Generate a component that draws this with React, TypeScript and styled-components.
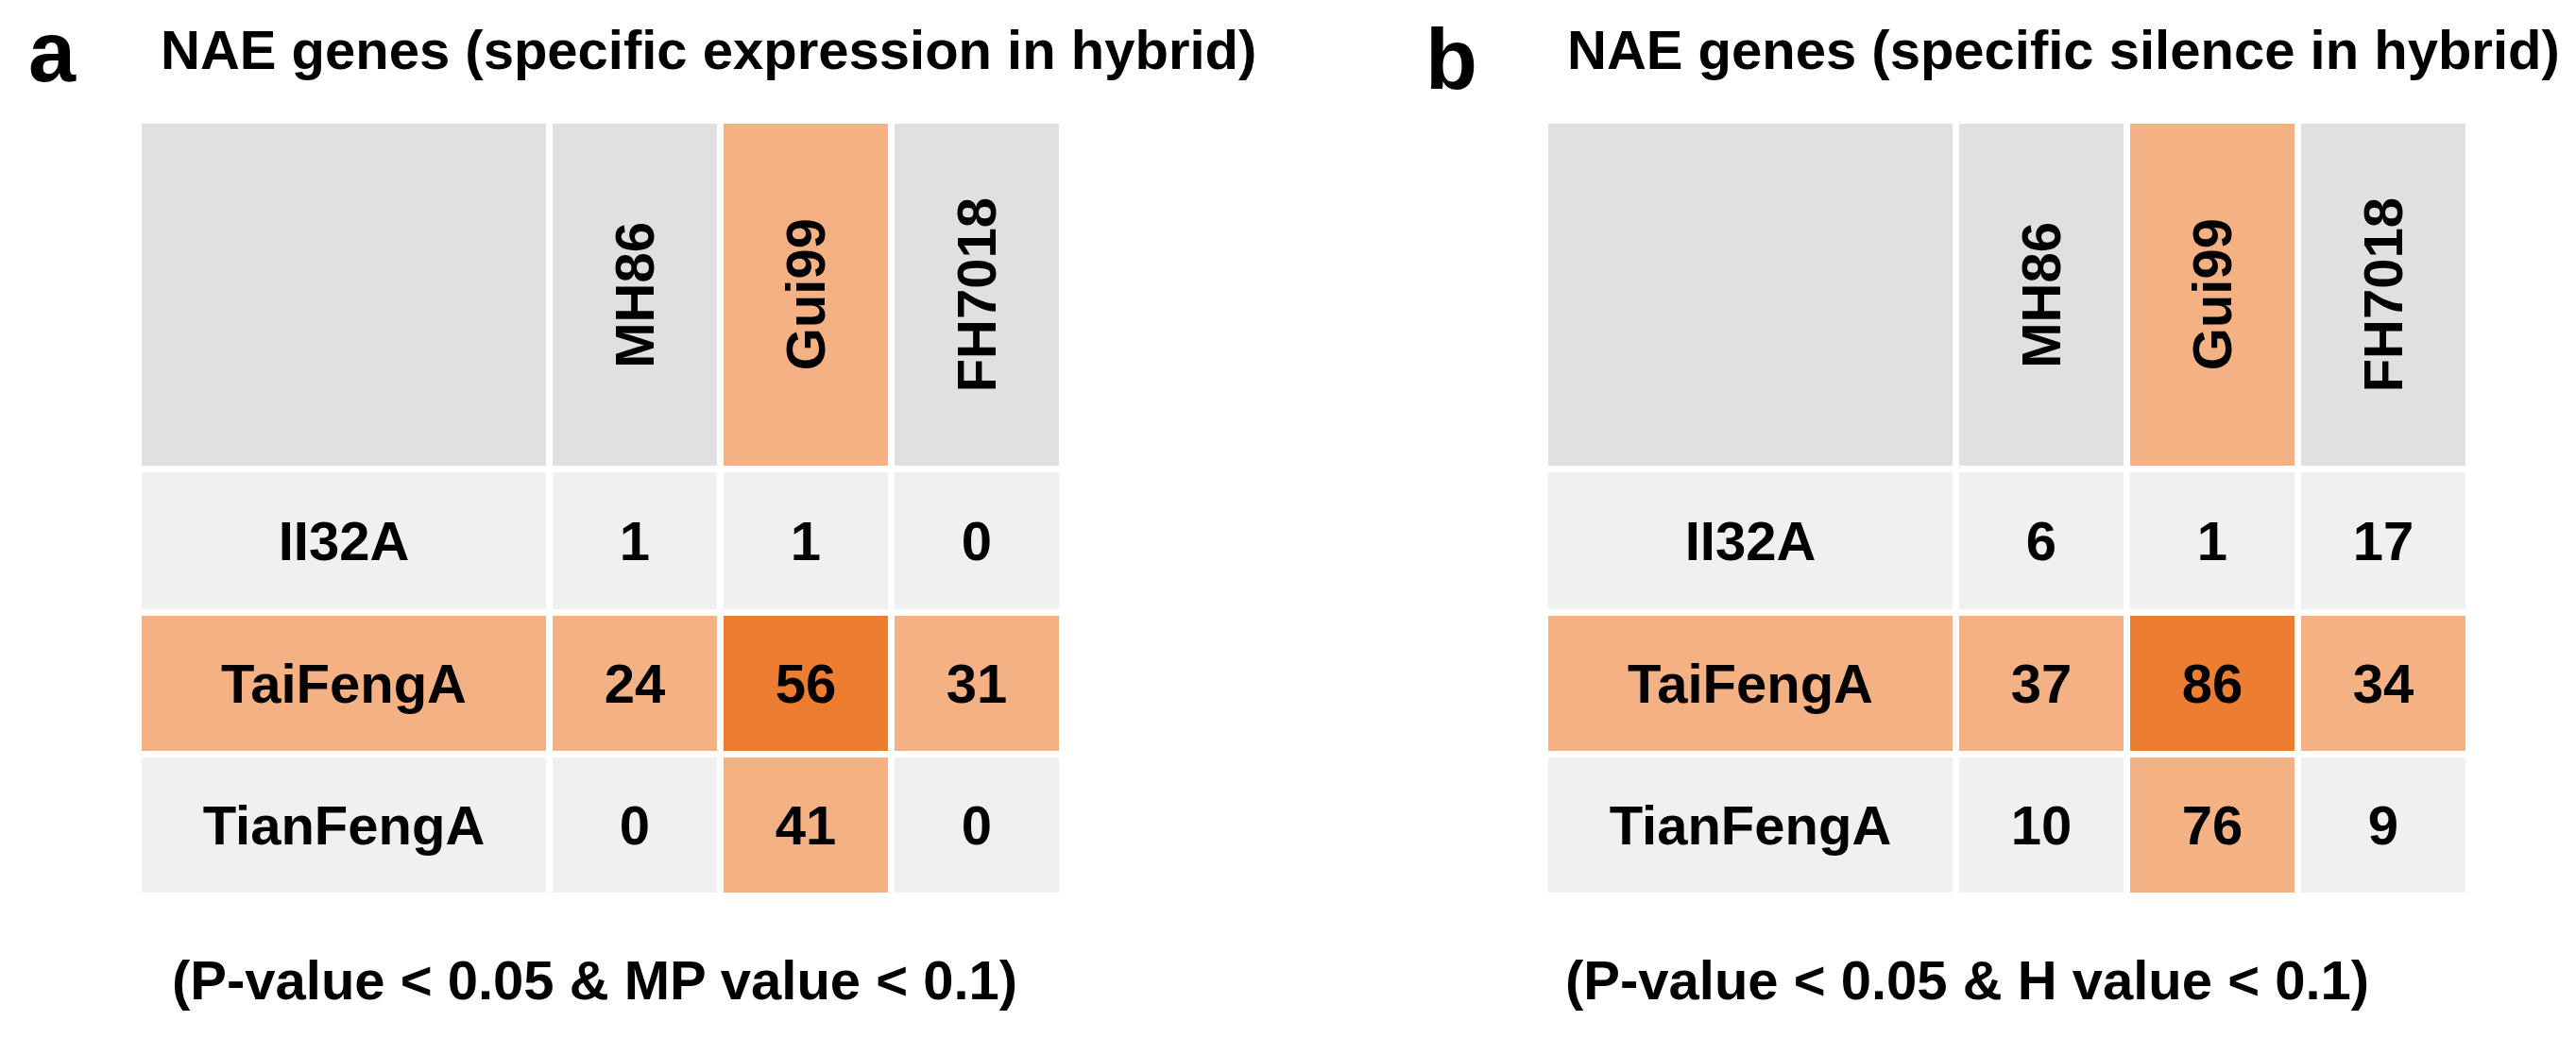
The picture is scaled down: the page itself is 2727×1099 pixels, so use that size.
import styled, { createGlobalStyle } from 'styled-components';

const GlobalStyle = createGlobalStyle`
	html,
	body {
		margin: 0;
		padding: 0;
		background: #ffffff;
	}

	body {
		color: #000000;
		font-family: 'Liberation Sans', Arial, sans-serif;
	}
`;

const palette = {
	head: '#e0e0e0',
	plain: '#f0f0f0',
	warm: '#f4b183',
	hot: '#ed7d31',
};

type Tone = keyof typeof palette;

const Figure = styled.main`
	display: grid;
	grid-template-columns: 1489px 1238px;
	height: 1099px;
	overflow: hidden;
	width: 2727px;
`;

const Panel = styled.section`
	display: flex;
	flex-direction: column;
`;

const Heading = styled.header`
	align-items: flex-start;
	display: flex;
	height: 131px;
`;

const Letter = styled.span<{ $left: number; $top: number }>`
	box-sizing: border-box;
	flex: 0 0 170px;
	font-size: 90px;
	font-weight: 700;
	line-height: 90px;
	margin-top: ${(p) => p.$top}px;
	padding-left: ${(p) => p.$left}px;
`;

const Title = styled.h2`
	font-size: 58px;
	font-weight: 700;
	line-height: 58px;
	margin: 24px 0 0;
	white-space: nowrap;
`;

const Grid = styled.div`
	display: grid;
	gap: 7px;
	grid-template-columns: 428px 174px 174px 174px;
	grid-template-rows: 362px 145px 143px 143px;
	margin-left: 150px;
	width: 971px;
`;

const Cell = styled.div<{ $tone: Tone }>`
	align-items: center;
	background: ${(p) => palette[p.$tone]};
	display: flex;
	font-size: 58px;
	font-weight: 700;
	justify-content: center;
	line-height: 58px;
	white-space: nowrap;
`;

const Sideways = styled.span`
	transform: rotate(180deg);
	writing-mode: vertical-rl;
`;

const Footnote = styled.p<{ $left: number }>`
	font-size: 58px;
	font-weight: 700;
	line-height: 58px;
	margin: 64px 0 0 ${(p) => 150 + p.$left}px;
	white-space: nowrap;
`;

type PanelData = {
	letter: string;
	letterLeft: number;
	letterTop: number;
	title: string;
	rows: { name: string; values: number[] }[];
	note: string;
	noteLeft: number;
};

const lines = ['MH86', 'Gui99', 'FH7018'];

const panels: PanelData[] = [
	{
		letter: 'a',
		letterLeft: 30,
		letterTop: 10,
		title: 'NAE genes (specific expression in hybrid)',
		rows: [
			{ name: 'II32A', values: [1, 1, 0] },
			{ name: 'TaiFengA', values: [24, 56, 31] },
			{ name: 'TianFengA', values: [0, 41, 0] },
		],
		note: '(P-value < 0.05 & MP value < 0.1)',
		noteLeft: 32,
	},
	{
		letter: 'b',
		letterLeft: 20,
		letterTop: 18,
		title: 'NAE genes (specific silence in hybrid)',
		rows: [
			{ name: 'II32A', values: [6, 1, 17] },
			{ name: 'TaiFengA', values: [37, 86, 34] },
			{ name: 'TianFengA', values: [10, 76, 9] },
		],
		note: '(P-value < 0.05 & H value < 0.1)',
		noteLeft: 18,
	},
];

// TaiFengA row is warm, Gui99 is warm in the header and TianFengA row, crossing is darkest
const toneFor = (row: number, col: number): Tone => {
	if (row === 1) return col === 2 ? 'hot' : 'warm';
	if (row === 2 && col === 2) return 'warm';
	return 'plain';
};

const NaePanel = ({ data }: { data: PanelData }) => (
	<Panel>
		<Heading>
			<Letter $left={data.letterLeft} $top={data.letterTop}>
				{data.letter}
			</Letter>
			<Title>{data.title}</Title>
		</Heading>
		<Grid>
			<Cell $tone="head" />
			{lines.map((line, i) => (
				<Cell key={line} $tone={i === 1 ? 'warm' : 'head'}>
					<Sideways>{line}</Sideways>
				</Cell>
			))}
			{data.rows.map((row, r) => [
				<Cell key={row.name} $tone={toneFor(r, 0)}>
					{row.name}
				</Cell>,
				...row.values.map((v, c) => (
					<Cell key={`${row.name}-${c}`} $tone={toneFor(r, c + 1)}>
						{v}
					</Cell>
				)),
			])}
		</Grid>
		<Footnote $left={data.noteLeft}>{data.note}</Footnote>
	</Panel>
);

export default function App() {
	return (
		<>
			<GlobalStyle />
			<Figure>
				{panels.map((p) => (
					<NaePanel key={p.letter} data={p} />
				))}
			</Figure>
		</>
	);
}
